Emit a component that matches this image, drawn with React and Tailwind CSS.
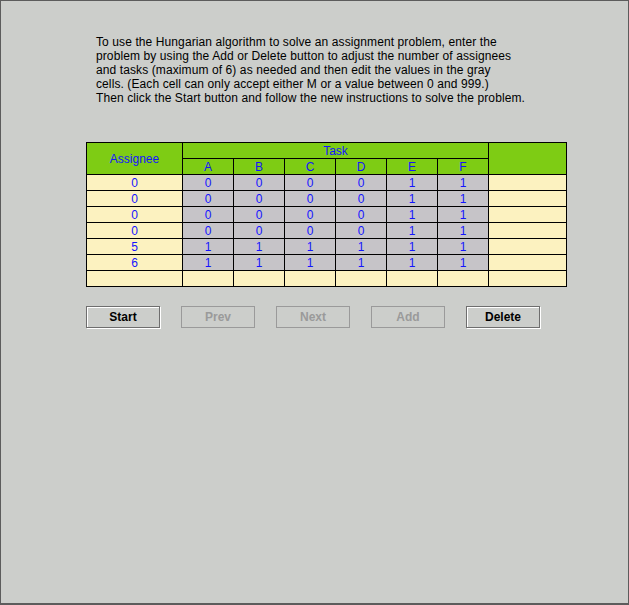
import React from "react";

const rows = [
  ["0", ["0", "0", "0", "0", "1", "1"]],
  ["0", ["0", "0", "0", "0", "1", "1"]],
  ["0", ["0", "0", "0", "0", "1", "1"]],
  ["0", ["0", "0", "0", "0", "1", "1"]],
  ["5", ["1", "1", "1", "1", "1", "1"]],
  ["6", ["1", "1", "1", "1", "1", "1"]],
];

function Btn({ label, enabled }) {
  return enabled ? (
    <div className="w-[74px] h-[22px] flex items-center justify-center border border-[#6e6e6e] shadow-[1px_1px_0_#ffffff,inset_1px_1px_0_#ffffff] bg-[#cccecb] text-[12px] font-bold text-black">
      {label}
    </div>
  ) : (
    <div className="w-[74px] h-[22px] flex items-center justify-center border border-[#9a9a9a] bg-[#cccecb] text-[12px] font-bold text-[#9a9a9a]">
      {label}
    </div>
  );
}

export default function App() {
  const cell = "flex items-center justify-center text-[12px] leading-none text-[#1414ff] pt-px";
  return (
    <div
      className="w-[629px] h-[605px] bg-[#cccecb] border-l border-t border-r border-b-2 border-[#5c5c5c] box-border overflow-hidden"
      style={{ fontFamily: '"Liberation Sans", Arial, sans-serif' }}
    >
      <div className="ml-[95px] mt-[34px] text-[12px] leading-[14px] tracking-[0.1px] text-black">
        <p>To use the Hungarian algorithm to solve an assignment problem, enter the</p>
        <p>problem by using the Add or Delete button to adjust the number of assignees</p>
        <p>and tasks (maximum of 6) as needed and then edit the values in the gray</p>
        <p>cells. (Each cell can only accept either M or a value between 0 and 999.)</p>
        <p>Then click the Start button and follow the new instructions to solve the problem.</p>
      </div>

      <div className="ml-[85px] mt-[37px] w-[481px] grid grid-cols-[95px_repeat(6,50px)_77px] auto-rows-[15px] gap-px p-px bg-black">
        <div className={`${cell} row-span-2 bg-[#7ecc14]`}>Assignee</div>
        <div className={`${cell} col-span-6 bg-[#7ecc14]`}>Task</div>
        <div className="row-span-2 bg-[#7ecc14]" />
        {["A", "B", "C", "D", "E", "F"].map((l) => (
          <div key={l} className={`${cell} bg-[#7ecc14]`}>{l}</div>
        ))}
        {rows.map(([a, vals], i) => (
          <React.Fragment key={i}>
            <div className={`${cell} bg-[#fcf2c0]`}>{a}</div>
            {vals.map((v, j) => (
              <div key={j} className={`${cell} bg-[#c6c4c8]`}>{v}</div>
            ))}
            <div className="bg-[#fcf2c0]" />
          </React.Fragment>
        ))}
        {Array.from({ length: 8 }).map((_, k) => (
          <div key={"e" + k} className="bg-[#fcf2c0]" />
        ))}
      </div>

      <div className="ml-[85px] mt-[19px] flex gap-[21px]">
        <Btn label="Start" enabled />
        <Btn label="Prev" />
        <Btn label="Next" />
        <Btn label="Add" />
        <Btn label="Delete" enabled />
      </div>
    </div>
  );
}
